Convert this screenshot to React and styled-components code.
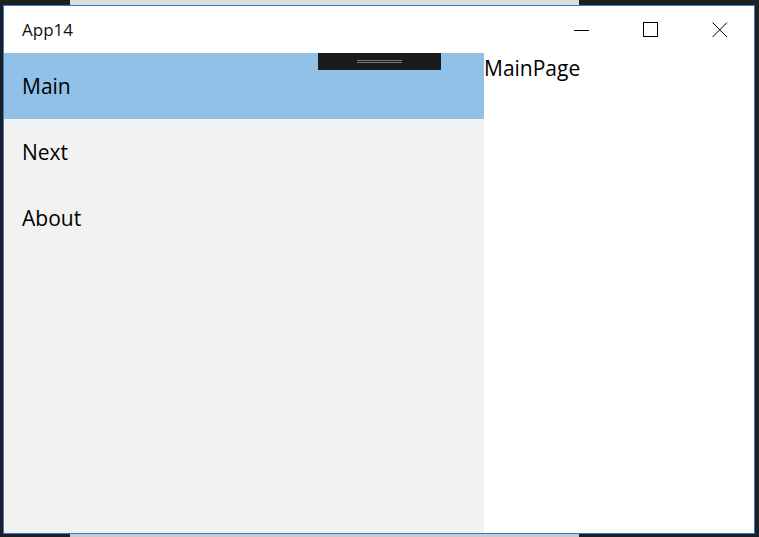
import React from "react";
import styled, {createGlobalStyle} from "styled-components";

const GlobalStyle = createGlobalStyle`
html, body {
    margin: 0;
    padding: 0;
    background: #202020;
}
#root {
    width: 759px;
    height: 537px;
    overflow: hidden;
}
`;

const Desktop = styled.div `
position: relative;
width: 759px;
height: 537px;
background-color: #1f1f1f;
font-family: "Open Sans", "Noto Sans", sans-serif;
`;

const BehindStrip = styled.div `
position: absolute;
left: 70px;
width: 509px;
height: 5px;
background-color: ${p => p.bottom ? "#c9c9c9" : "#dcdcdc"};
top: ${p => p.bottom ? "533px" : "0px"};
`;

const Window = styled.div `
position: absolute;
left: 3px;
top: 5px;
width: 750px;
height: 527px;
border: 1px solid #2f7bd3;
background-color: #ffffff;
display: flex;
flex-direction: column;
`;

const TitleBar = styled.div `
height: 47px;
display: flex;
align-items: center;
flex-shrink: 0;
`;

const Title = styled.div `
flex: 1;
padding-left: 18px;
font-size: 17px;
color: #111;
margin-top: -1px;
`;

const CaptionButton = styled.div `
width: 69px;
height: 47px;
display: flex;
align-items: center;
justify-content: center;
`;

const Body = styled.div `
flex: 1;
display: flex;
position: relative;
`;

const Pane = styled.div `
width: 480px;
background-color: #f2f2f2;
display: flex;
flex-direction: column;
`;

const NavItem = styled.div `
height: 66px;
display: flex;
align-items: center;
padding-left: 18px;
font-size: 21px;
color: #000;
background-color: ${p => p.active ? "#91c1e7" : "transparent"};
`;

const Content = styled.div `
flex: 1;
font-size: 21px;
color: #000;
padding-top: 2px;
line-height: 27px;
`;

const DebugBar = styled.div `
position: absolute;
left: 314px;
top: 0;
width: 123px;
height: 17px;
background-color: #1b1b1b;
display: flex;
flex-direction: column;
align-items: center;
justify-content: center;
gap: 1px;
`;

const Grip = styled.div `
width: 45px;
height: 1px;
background-color: #7a7a7a;
`;

const App = () => {
    const items = ["Main", "Next", "About"];
    return (
        <Desktop>
            <GlobalStyle/>
            <BehindStrip/>
            <BehindStrip bottom/>
            <Window>
                <TitleBar>
                    <Title>App14</Title>
                    <CaptionButton>
                        <svg width="16" height="16" viewBox="0 0 16 16">
                            <path d="M0 8.5H15" stroke="#000" strokeWidth="1" fill="none"/>
                        </svg>
                    </CaptionButton>
                    <CaptionButton>
                        <svg width="16" height="16" viewBox="0 0 16 16">
                            <rect x="0.5" y="0.5" width="14" height="14" stroke="#000" strokeWidth="1" fill="none"/>
                        </svg>
                    </CaptionButton>
                    <CaptionButton>
                        <svg width="16" height="16" viewBox="0 0 16 16">
                            <path d="M0.5 0.5L15 15M15 0.5L0.5 15" stroke="#000" strokeWidth="1" fill="none"/>
                        </svg>
                    </CaptionButton>
                </TitleBar>
                <Body>
                    <Pane>
                        {items.map((name, index) => (
                            <NavItem key={name} active={index === 0}>{name}</NavItem>
                        ))}
                    </Pane>
                    <Content>MainPage</Content>
                    <DebugBar>
                        <Grip/>
                        <Grip/>
                    </DebugBar>
                </Body>
            </Window>
        </Desktop>
    )
};

export default App;
